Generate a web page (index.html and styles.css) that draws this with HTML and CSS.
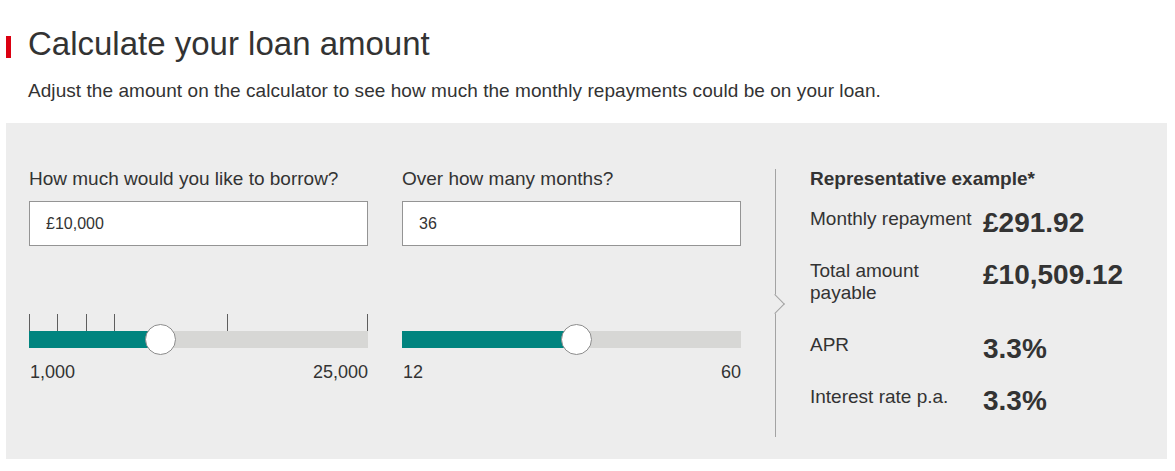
FILE: index.html
```html
<!DOCTYPE html>
<html lang="en">
<head>
<meta charset="utf-8">
<title>Calculate your loan amount</title>
<link rel="stylesheet" href="styles.css">
</head>
<body>
<header class="intro">
  <div class="title-row">
    <span class="accent"></span>
    <h1 class="title">Calculate your loan amount</h1>
  </div>
  <p class="lead">Adjust the amount on the calculator to see how much the monthly repayments could be on your loan.</p>
</header>

<section class="calc">
  <div class="col">
    <label class="field-label" for="amount">How much would you like to borrow?</label>
    <input class="field" id="amount" type="text" value="£10,000">
    <div class="slider">
      <div class="ticks">
        <span class="tick" style="left:0%"></span>
        <span class="tick" style="left:8.33%"></span>
        <span class="tick" style="left:16.67%"></span>
        <span class="tick" style="left:25%"></span>
        <span class="tick" style="left:58.33%"></span>
        <span class="tick" style="left:calc(100% - 1px)"></span>
      </div>
      <div class="track">
        <div class="fill" style="width:38.9%"></div>
        <span class="thumb" style="left:38.9%"></span>
      </div>
    </div>
    <div class="range">
      <span>1,000</span>
      <span>25,000</span>
    </div>
  </div>

  <div class="col">
    <label class="field-label" for="months">Over how many months?</label>
    <input class="field" id="months" type="text" value="36">
    <div class="slider">
      <div class="ticks"></div>
      <div class="track">
        <div class="fill" style="width:51.5%"></div>
        <span class="thumb" style="left:51.5%"></span>
      </div>
    </div>
    <div class="range">
      <span>12</span>
      <span>60</span>
    </div>
  </div>

  <div class="results">
    <span class="pointer"></span>
    <h2 class="results-title">Representative example*</h2>
    <dl class="rows">
      <div class="row">
        <dt class="row-label">Monthly repayment</dt>
        <dd class="row-value">£291.92</dd>
      </div>
      <div class="row">
        <dt class="row-label">Total amount payable</dt>
        <dd class="row-value">£10,509.12</dd>
      </div>
      <div class="row">
        <dt class="row-label">APR</dt>
        <dd class="row-value">3.3%</dd>
      </div>
      <div class="row">
        <dt class="row-label">Interest rate p.a.</dt>
        <dd class="row-value">3.3%</dd>
      </div>
    </dl>
  </div>
</section>
</body>
</html>
```
FILE: styles.css
```css
* { box-sizing: border-box; }

html, body {
  margin: 0;
  padding: 0;
  background: #ffffff;
}

body {
  font-family: "Liberation Sans", Arial, sans-serif;
  color: #333333;
}

.intro {
  padding-top: 24px;
}

.title-row {
  display: flex;
  align-items: center;
  padding-left: 6px;
}

.accent {
  display: block;
  width: 5px;
  height: 22px;
  background: #db0011;
  margin-top: 6px;
}

.title {
  margin: 0 0 0 17px;
  font-size: 33px;
  font-weight: normal;
  line-height: 40px;
  color: #333333;
}

.lead {
  margin: 15px 0 0 0;
  padding-left: 28px;
  font-size: 19px;
  line-height: 24px;
  letter-spacing: 0.06px;
}

.calc {
  margin: 20px 8px 0 6px;
  background: #ededed;
  padding: 44px 0 22px 23px;
  display: grid;
  grid-template-columns: 339px 339px 1fr;
  column-gap: 34px;
  align-items: start;
}

.col {
  display: flex;
  flex-direction: column;
}

.field-label {
  font-size: 19px;
  line-height: 24px;
}

.field {
  margin-top: 10px;
  width: 100%;
  height: 45px;
  border: 1px solid #949494;
  background: #ffffff;
  padding: 0 16px;
  font-family: "Liberation Sans", Arial, sans-serif;
  font-size: 16px;
  color: #333333;
  outline: none;
}

.slider {
  margin-top: 68px;
}

.ticks {
  position: relative;
  height: 17px;
}

.tick {
  position: absolute;
  top: 0;
  width: 1px;
  height: 17px;
  background: #5e5e5e;
}

.track {
  position: relative;
  height: 17px;
  background: #d7d7d5;
}

.fill {
  height: 100%;
  background: #00847f;
}

.thumb {
  position: absolute;
  top: -7px;
  width: 31px;
  height: 31px;
  margin-left: -15.5px;
  border-radius: 50%;
  background: #ffffff;
  border: 1px solid #8c8c8c;
}

.range {
  margin-top: 13px;
  display: flex;
  justify-content: space-between;
  font-size: 18px;
  line-height: 22px;
}

.range span:first-child {
  margin-left: 1px;
}

.results {
  position: relative;
  margin-top: 2px;
  border-left: 1px solid #a3a3a3;
  padding: 0 0 29px 34px;
}

.pointer {
  position: absolute;
  left: -8px;
  top: 128px;
  width: 14px;
  height: 14px;
  background: #ededed;
  border-top: 1px solid #a3a3a3;
  border-right: 1px solid #a3a3a3;
  transform: rotate(45deg);
}

.results-title {
  margin: 0;
  font-size: 19px;
  line-height: 19px;
  font-weight: bold;
}

.rows {
  margin: 20px 0 0 0;
  display: flex;
  flex-direction: column;
  gap: 30px;
}

.row {
  display: flex;
  align-items: flex-start;
}

.row-label {
  width: 173px;
  padding-right: 8px;
  font-size: 19px;
  line-height: 22px;
}

.row-value {
  margin: 4px 0 -4px 0;
  font-size: 28px;
  line-height: 22px;
  font-weight: bold;
}
```
